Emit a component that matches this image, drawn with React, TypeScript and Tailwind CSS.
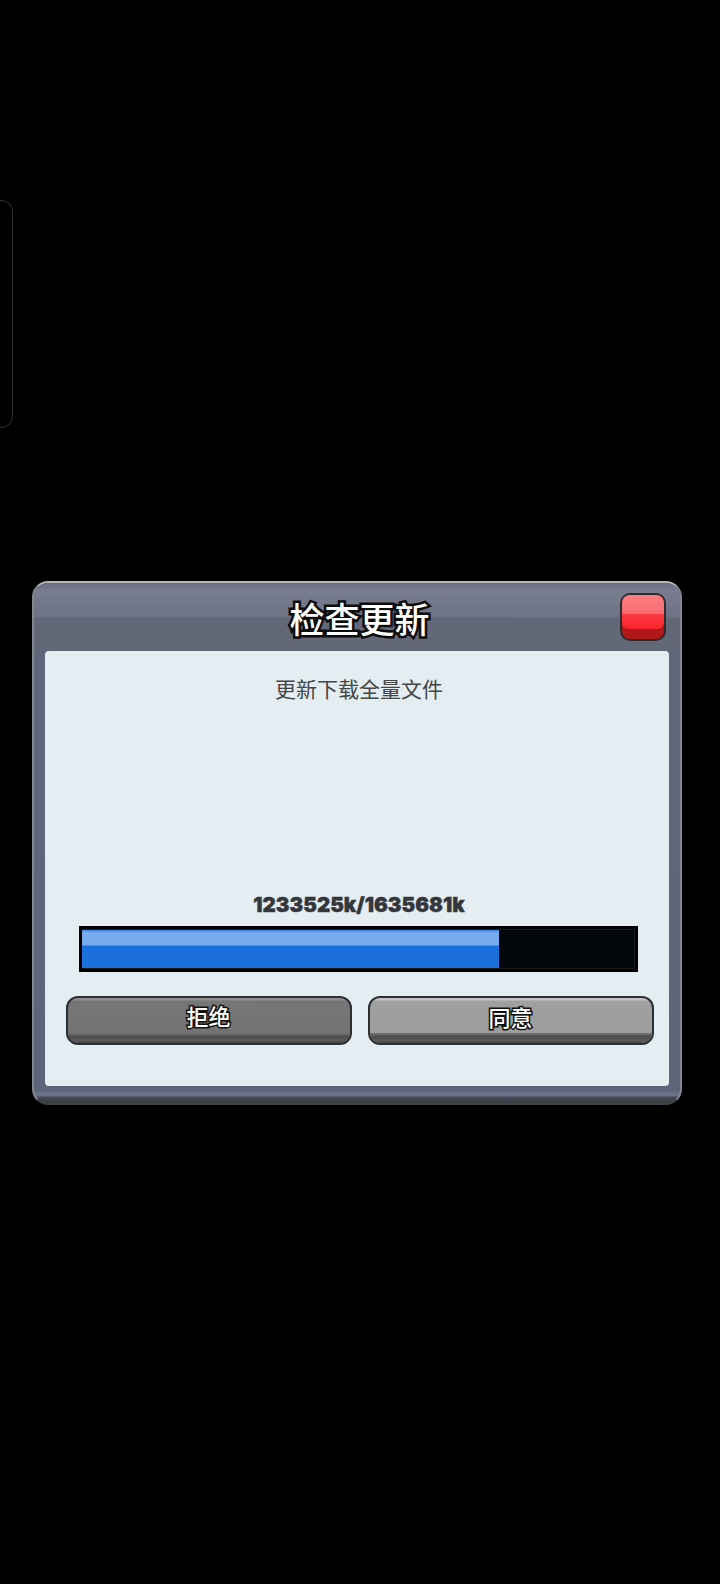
const fontStack = "font-['Noto_Sans_CJK_SC','Noto_Sans',sans-serif]";

function GameButton({ label, face, labelOffset }: { label: string; face: string; labelOffset: string }) {
    return (
        <button
            className={`flex h-[49px] flex-1 flex-col overflow-hidden rounded-[12px] border-2 border-[#2c2f33] ${face}`}
        >
            <span className={`flex flex-1 items-center justify-center ${labelOffset}`}>
                <span
                    className={`${fontStack} text-[22px] leading-none font-medium text-white [-webkit-text-stroke:3px_#111] [paint-order:stroke_fill]`}
                >
                    {label}
                </span>
            </span>
            <span className="h-[10px] w-full bg-[linear-gradient(to_bottom,#6f6f6f_0px,#666666_2px,#4c4c4c_3px,#5a5a5a_8px,#3e3e3e_100%)]" />
        </button>
    );
}

export default function App() {
    return (
        <div className="min-h-[1584px] w-[720px] overflow-hidden bg-black pt-[200px]">
            {/* edge handle on the left */}
            <div className="h-[228px] w-[13px] rounded-r-[12px] border border-l-0 border-[#2e2e2a]" />

            <div className="mt-[153px] ml-[32px] flex h-[524px] w-[650px] flex-col rounded-[16px] border-2 border-t-[#b4b6bc] border-r-[#83868f] border-b-[#3c4049] border-l-[#84878f] bg-[linear-gradient(to_bottom,#60687c_0px,#5c6578_503px,#5c6578_508px,#677086_509px,#677086_513px,#454a55_514px,#3a3e47_100%)]">
                <div className="relative flex h-[68px] shrink-0 items-center justify-center rounded-t-[14px] bg-[linear-gradient(to_bottom,#6a6e80_0px,#797d90_8px,#6e7285_34px,#636879_35px,#636879_100%)] pl-[5px]">
                    <span
                        className={`${fontStack} text-[35px] leading-none font-medium text-white [-webkit-text-stroke:5px_#0c0c0c] [paint-order:stroke_fill] [text-shadow:0_2px_0_#0c0c0c]`}
                    >
                        检查更新
                    </span>
                    <div className="absolute top-[10px] right-[14px] flex h-[48px] w-[46px] flex-col overflow-hidden rounded-[10px] border-2 border-[#2e2b30] bg-[#b01719]">
                        <div className="h-[19px] bg-[linear-gradient(to_bottom,#fb7d80,#f96b71)]" />
                        <div className="h-[15px] rounded-b-[6px] bg-[linear-gradient(to_bottom,#fb3a41,#f7242c)]" />
                    </div>
                </div>

                <div className="mx-[11px] flex h-[435px] flex-col items-center rounded-[4px] bg-[#e3edf2] pt-[25px] pl-[4px]">
                    <p className={`${fontStack} text-[21px] leading-[24px] text-[#454545]`}>
                        更新下载全量文件
                    </p>

                    <p className="mt-[193px] font-['Inter',sans-serif] text-[20.5px] leading-[24px] font-black text-[#33363b] [-webkit-text-stroke:0.4px_#33363b]">
                        1233525k/1635681k
                    </p>

                    <div className="mt-[9px] -ml-[2px] h-[46px] w-[559px] border-[3px] border-black bg-[#03060a] py-[1px] pr-[1px] shadow-[inset_0_0_0_1px_#1c1c1c]">
                        <div className="h-full w-[417px] bg-[linear-gradient(to_bottom,#3d84e0_0px,#77adf0_3px,#77adf0_15px,#1c70dc_16px,#1c70dc_100%)]" />
                    </div>

                    <div className="mt-[24px] ml-[1px] flex w-[588px] gap-[16px]">
                        <GameButton
                            label="拒绝"
                            labelOffset="pb-[2px]"
                            face="bg-[linear-gradient(to_bottom,#8e8e8e_0px,#8e8e8e_2px,#767676_3px,#737373_100%)]"
                        />
                        <GameButton
                            label="同意"
                            labelOffset=""
                            face="bg-[linear-gradient(to_bottom,#c4c4c4_0px,#c4c4c4_2px,#a0a0a0_3px,#9c9c9c_100%)]"
                        />
                    </div>
                </div>
            </div>
        </div>
    );
}
